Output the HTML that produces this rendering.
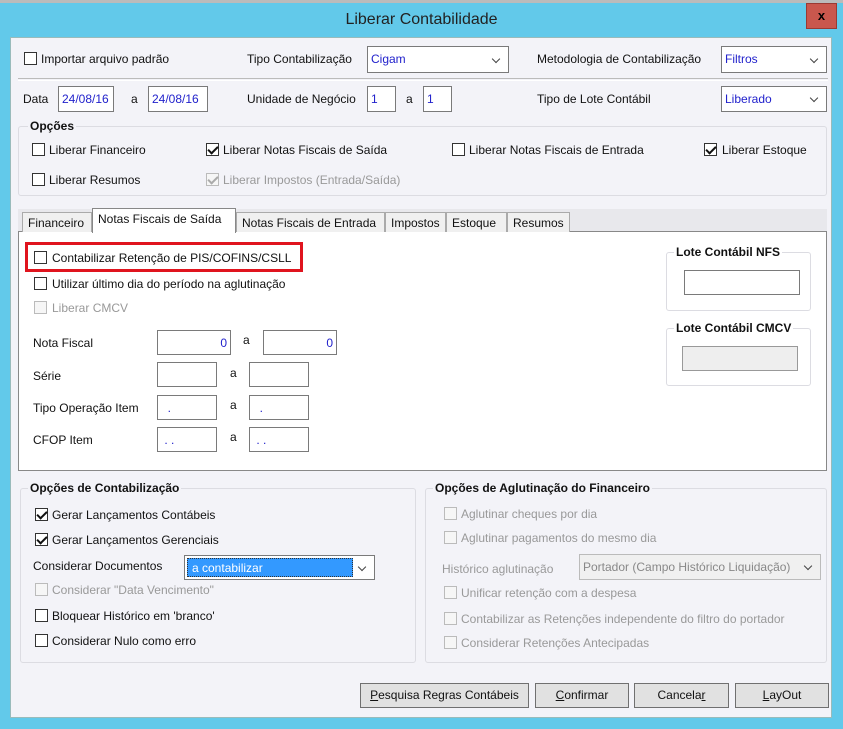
<!DOCTYPE html>
<html><head><meta charset="utf-8"><style>
*{box-sizing:border-box;margin:0;padding:0}
body{width:843px;height:729px;overflow:hidden;background:#62c9ea;font-family:"Liberation Sans",sans-serif;font-size:12px;color:#111;position:relative}
.a{position:absolute;white-space:nowrap}
.content{position:absolute;left:10px;top:37px;width:822px;height:681px;background:#f3f3f8;border:1px solid #9bb}
.cb{position:absolute;width:13px;height:13px;border:1px solid #333;background:#fff}
.cb.d{border-color:#bbb;background:#f6f6f6}
.cb.c::after{content:"";position:absolute;left:3px;top:0px;width:4px;height:8px;border:solid #111;border-width:0 2px 2px 0;transform:rotate(45deg)}
.cb.d.c::after{border-color:#aaa}
.in{position:absolute;background:#fff;border:1px solid #7a7a7a;color:#2222cc;padding:2px 3px;line-height:20px}
.sel::after{content:"";position:absolute;right:9px;top:50%;margin-top:-4px;width:5px;height:5px;border:solid #444;border-width:0 1.5px 1.5px 0;transform:rotate(45deg)}
.grp{position:absolute;border:1px solid #dcdce2;border-radius:3px}
.gt{position:absolute;font-weight:bold;background:#f3f3f8;padding:0 2px}
.tab{position:absolute;top:212px;height:20px;border:1px solid #aaa;border-bottom:none;background:#f0f0f0;padding:3px 5px;font-size:12px}
.btn{position:absolute;top:683px;height:25px;background:#e1e1e1;border:1px solid #707070;text-align:center;line-height:23px}
.dis{color:#999}
</style></head><body>
<div class="a" style="left:0;top:0;width:843px;height:3px;background:#bbb"></div>
<div class="a" style="left:0;top:4px;width:843px;font-size:16px;text-align:center;line-height:32px;color:#222">Liberar Contabilidade</div>
<div class="a" style="left:806px;top:3px;width:31px;height:26px;background:#c9574d;border:1px solid #9a3a33;color:#000;font-weight:bold;text-align:center;line-height:24px;font-size:13px">x</div>
<div class="content"></div>

<div class="cb" style="left:24px;top:52px"></div><div class="a" style="left:41px;top:52px">Importar arquivo padrão</div>
<div class="a" style="left:247px;top:52px">Tipo Contabilização</div>
<div class="in sel" style="left:367px;top:46px;width:142px;height:27px">Cigam</div>
<div class="a" style="left:537px;top:52px">Metodologia de Contabilização</div>
<div class="in sel" style="left:721px;top:46px;width:106px;height:27px">Filtros</div>
<div class="a" style="left:18px;top:78px;width:810px;height:3px;border-top:1px solid #bbb;border-bottom:1px solid #fff"></div>

<div class="a" style="left:23px;top:92px">Data</div>
<div class="in" style="left:58px;top:86px;width:56px;height:26px">24/08/16</div>
<div class="a" style="left:131px;top:92px">a</div>
<div class="in" style="left:148px;top:86px;width:60px;height:26px">24/08/16</div>
<div class="a" style="left:247px;top:92px">Unidade de Negócio</div>
<div class="in" style="left:367px;top:86px;width:29px;height:26px">1</div>
<div class="a" style="left:406px;top:92px">a</div>
<div class="in" style="left:423px;top:86px;width:29px;height:26px">1</div>
<div class="a" style="left:537px;top:92px">Tipo de Lote Contábil</div>
<div class="in sel" style="left:721px;top:86px;width:106px;height:26px">Liberado</div>

<div class="grp" style="left:18px;top:126px;width:809px;height:70px"></div>
<div class="gt" style="left:28px;top:119px">Opções</div>
<div class="cb" style="left:32px;top:143px"></div><div class="a" style="left:49px;top:143px">Liberar Financeiro</div>
<div class="cb c" style="left:206px;top:143px"></div><div class="a" style="left:223px;top:143px">Liberar Notas Fiscais de Saída</div>
<div class="cb" style="left:452px;top:143px"></div><div class="a" style="left:469px;top:143px">Liberar Notas Fiscais de Entrada</div>
<div class="cb c" style="left:704px;top:143px"></div><div class="a" style="left:722px;top:143px">Liberar Estoque</div>
<div class="cb" style="left:32px;top:173px"></div><div class="a" style="left:49px;top:173px">Liberar Resumos</div>
<div class="cb d c" style="left:206px;top:173px"></div><div class="a dis" style="left:223px;top:173px">Liberar Impostos (Entrada/Saída)</div>

<div class="a" style="left:18px;top:209px;width:809px;height:22px;background:#e8e8ec"></div>
<div class="a" style="left:18px;top:231px;width:809px;height:240px;background:#fff;border:1px solid #888"></div>
<div class="tab" style="left:22px;width:70px">Financeiro</div>
<div class="tab" style="left:236px;width:149px">Notas Fiscais de Entrada</div>
<div class="tab" style="left:385px;width:61px">Impostos</div>
<div class="tab" style="left:446px;width:61px">Estoque</div>
<div class="tab" style="left:507px;width:63px">Resumos</div>
<div class="tab" style="left:92px;top:208px;width:144px;height:25px;background:#fff;border-color:#888;z-index:2">Notas Fiscais de Saída</div>

<div class="a" style="left:25px;top:242px;width:278px;height:30px;border:3px solid #e0141e"></div>
<div class="cb" style="left:34px;top:251px"></div><div class="a" style="left:52px;top:251px">Contabilizar Retenção de PIS/COFINS/CSLL</div>
<div class="cb" style="left:34px;top:277px"></div><div class="a" style="left:52px;top:277px">Utilizar último dia do período na aglutinação</div>
<div class="cb d" style="left:34px;top:301px"></div><div class="a dis" style="left:52px;top:301px">Liberar CMCV</div>
<div class="a" style="left:33px;top:336px">Nota Fiscal</div>
<div class="in" style="left:157px;top:330px;width:74px;height:25px;text-align:right">0</div>
<div class="a" style="left:243px;top:333px">a</div>
<div class="in" style="left:263px;top:330px;width:74px;height:25px;text-align:right">0</div>
<div class="a" style="left:33px;top:369px">Série</div>
<div class="in" style="left:157px;top:362px;width:60px;height:25px"></div>
<div class="a" style="left:230px;top:366px">a</div>
<div class="in" style="left:249px;top:362px;width:60px;height:25px"></div>
<div class="a" style="left:33px;top:401px">Tipo Operação Item</div>
<div class="in" style="left:157px;top:395px;width:60px;height:25px">&nbsp;&nbsp;.</div>
<div class="a" style="left:230px;top:398px">a</div>
<div class="in" style="left:249px;top:395px;width:60px;height:25px">&nbsp;&nbsp;.</div>
<div class="a" style="left:33px;top:433px">CFOP Item</div>
<div class="in" style="left:157px;top:427px;width:60px;height:25px">&nbsp;. .</div>
<div class="a" style="left:230px;top:430px">a</div>
<div class="in" style="left:249px;top:427px;width:60px;height:25px">&nbsp;. .</div>

<div class="grp" style="left:666px;top:252px;width:145px;height:59px"></div>
<div class="gt" style="left:674px;top:245px;background:#fff">Lote Contábil NFS</div>
<div class="in" style="left:684px;top:270px;width:116px;height:25px"></div>
<div class="grp" style="left:666px;top:328px;width:145px;height:58px"></div>
<div class="gt" style="left:674px;top:321px;background:#fff">Lote Contábil CMCV</div>
<div class="in" style="left:682px;top:346px;width:116px;height:25px;background:#eee;border-color:#999"></div>

<div class="grp" style="left:20px;top:488px;width:396px;height:175px"></div>
<div class="gt" style="left:28px;top:481px">Opções de Contabilização</div>
<div class="cb c" style="left:35px;top:508px"></div><div class="a" style="left:52px;top:508px">Gerar Lançamentos Contábeis</div>
<div class="cb c" style="left:35px;top:533px"></div><div class="a" style="left:52px;top:533px">Gerar Lançamentos Gerenciais</div>
<div class="a" style="left:33px;top:559px">Considerar Documentos</div>
<div class="in sel" style="left:184px;top:555px;width:191px;height:25px;padding:2px"><div style="background:#3399ff;color:#fff;width:166px;height:19px;line-height:18px;padding-left:4px;border:1px dotted #333">a contabilizar</div></div>
<div class="cb d" style="left:35px;top:583px"></div><div class="a dis" style="left:52px;top:583px">Considerar "Data Vencimento"</div>
<div class="cb" style="left:35px;top:609px"></div><div class="a" style="left:52px;top:609px">Bloquear Histórico em 'branco'</div>
<div class="cb" style="left:35px;top:634px"></div><div class="a" style="left:52px;top:634px">Considerar Nulo como erro</div>

<div class="grp" style="left:425px;top:488px;width:402px;height:175px"></div>
<div class="gt" style="left:433px;top:481px">Opções de Aglutinação do Financeiro</div>
<div class="cb d" style="left:444px;top:507px"></div><div class="a dis" style="left:461px;top:507px">Aglutinar cheques por dia</div>
<div class="cb d" style="left:444px;top:531px"></div><div class="a dis" style="left:461px;top:531px">Aglutinar pagamentos do mesmo dia</div>
<div class="a dis" style="left:442px;top:562px">Histórico aglutinação</div>
<div class="in sel" style="left:579px;top:554px;width:242px;height:26px;background:#f0f0f0;border-color:#bbb;color:#888">Portador (Campo Histórico Liquidação)</div>
<div class="cb d" style="left:444px;top:586px"></div><div class="a dis" style="left:461px;top:586px">Unificar retenção com a despesa</div>
<div class="cb d" style="left:444px;top:612px"></div><div class="a dis" style="left:461px;top:612px">Contabilizar as Retenções independente do filtro do portador</div>
<div class="cb d" style="left:444px;top:636px"></div><div class="a dis" style="left:461px;top:636px">Considerar Retenções Antecipadas</div>

<div class="btn" style="left:360px;width:169px"><u>P</u>esquisa Regras Contábeis</div>
<div class="btn" style="left:535px;width:94px"><u>C</u>onfirmar</div>
<div class="btn" style="left:634px;width:95px">Cancela<u>r</u></div>
<div class="btn" style="left:735px;width:94px"><u>L</u>ayOut</div>
</body></html>
